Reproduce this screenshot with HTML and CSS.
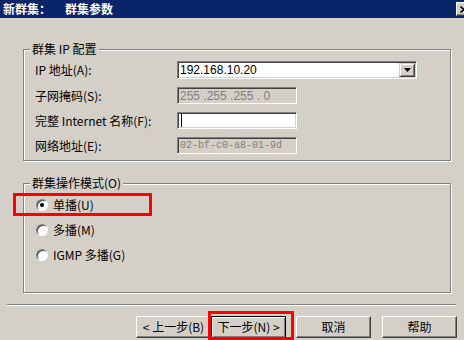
FILE: index.html
```html
<!DOCTYPE html>
<html lang="zh-CN">
<head>
    <meta charset="UTF-8">
    <meta name="viewport" content="width=device-width, initial-scale=1.0">
    <title>新群集：群集参数</title>
    <link rel="stylesheet" href="styles.css">
</head>
<body>
    <!-- Title bar -->
    <div class="titlebar">
        <span class="title">新群集：<span class="title-sub">群集参数</span></span>
        <span class="close">
            <svg width="8" height="7" viewBox="0 0 8 7">
                <path d="M0.5 0.5 L7.5 6.5 M7.5 0.5 L0.5 6.5" stroke="#000" stroke-width="1.6"/>
            </svg>
        </span>
    </div>

    <!-- IP settings -->
    <div class="group group-ip">
        <div class="group-title">群集 IP 配置</div>
        <div class="form">
            <label class="form-label">IP 地址(A):</label>
            <div class="combo">
                <span class="combo-text">192.168.10.20</span>
                <span class="combo-btn">
                    <svg width="7" height="4" viewBox="0 0 7 4"><path d="M0 0 H7 L3.5 4 Z" fill="#000"/></svg>
                </span>
            </div>

            <label class="form-label">子网掩码(S):</label>
            <div class="field disabled">255 .255 .255 . 0</div>

            <label class="form-label">完整 Internet 名称(F):</label>
            <div class="field"><span class="caret"></span></div>

            <label class="form-label">网络地址(E):</label>
            <div class="field disabled mono">02-bf-c0-a8-01-9d</div>
        </div>
    </div>

    <!-- Operation mode -->
    <div class="group group-mode">
        <div class="group-title">群集操作模式(O)</div>
        <div class="radios">
            <div class="radio-row highlight"><span class="radio checked"></span>单播(U)</div>
            <div class="radio-row"><span class="radio"></span>多播(M)</div>
            <div class="radio-row"><span class="radio"></span>IGMP 多播(G)</div>
        </div>
    </div>

    <div class="separator"></div>

    <div class="buttons">
        <button class="btn">&lt; 上一步(B)</button>
        <button class="btn default highlight">下一步(N) &gt;</button>
        <button class="btn btn-cancel">取消</button>
        <button class="btn btn-help">帮助</button>
    </div>
</body>
</html>
```

FILE: styles.css
```css
body {
    margin: 0;
    width: 464px;
    height: 340px;
    overflow: hidden;
    background-color: #d4d0c8;
    font-family: "Noto Sans CJK SC", sans-serif;
    font-size: 12px;
    color: #000;
}

/* Title bar */
.titlebar {
    height: 18px;
    background-color: #0a246a;
    display: flex;
    align-items: center;
    justify-content: space-between;
    padding-left: 3px;
    overflow: hidden;
}

.title {
    color: #fff;
    font-weight: bold;
    line-height: 18px;
}

.title-sub {
    margin-left: 14px;
}

.close {
    width: 16px;
    height: 14px;
    margin-right: -8px;
    box-sizing: border-box;
    background-color: #d4d0c8;
    border: 1px solid;
    border-color: #fff #404040 #404040 #fff;
    box-shadow: inset -1px -1px 0 #808080;
    display: flex;
    align-items: center;
    justify-content: center;
}

/* Group boxes */
.group {
    margin: 31px 13px 0 23px;
    border: 1px solid #808080;
    box-shadow: inset 1px 1px 0 #fff, 1px 1px 0 #fff;
    display: flex;
    flex-direction: column;
}

.group-title {
    align-self: flex-start;
    margin: -8px 0 0 6px;
    padding: 0 2px;
    height: 14px;
    line-height: 14px;
    background-color: #d4d0c8;
}

.group-mode {
    margin-top: 22px;
}

.form {
    display: grid;
    grid-template-columns: 142px auto;
    grid-template-rows: 18px 17px 17px 17px;
    row-gap: 8px;
    align-items: center;
    padding: 5px 0 6px 11px;
}

.form-label {
    line-height: 14px;
}

/* Sunken edit controls */
.combo,
.field {
    box-sizing: border-box;
    border: 1px solid;
    border-color: #808080 #fff #fff #808080;
    box-shadow: inset 1px 1px 0 #404040, inset -1px -1px 0 #d4d0c8;
    background-color: #fff;
    display: flex;
    align-items: center;
    font-family: "Liberation Sans", sans-serif;
}

.combo {
    width: 240px;
    height: 18px;
}

.combo-text {
    padding-left: 2px;
}

.combo-btn {
    margin: 0 1px 0 auto;
    width: 16px;
    height: 14px;
    box-sizing: border-box;
    background-color: #d4d0c8;
    border: 1px solid;
    border-color: #d4d0c8 #404040 #404040 #d4d0c8;
    box-shadow: inset 1px 1px 0 #fff, inset -1px -1px 0 #808080;
    display: flex;
    align-items: center;
    justify-content: center;
}

.field {
    width: 120px;
    height: 17px;
    padding-left: 2px;
}

.field.disabled {
    background-color: #d4d0c8;
    color: #808080;
}

.field.mono {
    font-family: "Liberation Mono", monospace;
    font-size: 10px;
}

.caret {
    width: 1px;
    height: 13px;
    background-color: #000;
    margin-left: 1px;
}

/* Radio buttons */
.radios {
    display: flex;
    flex-direction: column;
    gap: 9px;
    padding: 7px 0 29px 0;
}

.radio-row {
    position: relative;
    display: flex;
    align-items: center;
    height: 16px;
    padding-left: 12px;
    line-height: 14px;
}

.radio {
    width: 12px;
    height: 12px;
    box-sizing: border-box;
    border-radius: 50%;
    background-color: #fff;
    border: 1px solid;
    border-color: #808080 #fff #fff #808080;
    box-shadow: inset 1px 1px 0 #404040;
    margin-right: 5px;
    display: flex;
    align-items: center;
    justify-content: center;
}

.radio.checked::after {
    content: "";
    width: 4px;
    height: 4px;
    border-radius: 50%;
    background-color: #000;
}

/* Red annotation boxes */
.radio-row.highlight::after {
    content: "";
    position: absolute;
    left: -11px;
    top: -4px;
    width: 139px;
    height: 23px;
    border: 3px solid #ff0000;
    box-sizing: border-box;
}

.btn.highlight::after {
    content: "";
    position: absolute;
    left: -4px;
    top: -6px;
    width: 86px;
    height: 29px;
    border: 3px solid #ff0000;
    box-sizing: border-box;
}

/* Footer */
.separator {
    margin: 11px 8px 0 7px;
    border-top: 1px solid #808080;
    border-bottom: 1px solid #fff;
}

.buttons {
    display: flex;
    justify-content: flex-end;
    margin-top: 10px;
    padding-right: 7px;
}

.btn {
    position: relative;
    width: 75px;
    height: 22px;
    box-sizing: border-box;
    padding: 0;
    background-color: #d4d0c8;
    border: 1px solid;
    border-color: #fff #404040 #404040 #fff;
    box-shadow: inset -1px -1px 0 #808080;
    font-family: "Noto Sans CJK SC", sans-serif;
    font-size: 12px;
    color: #000;
    line-height: 14px;
}

.btn.default {
    border-color: #000;
    box-shadow: inset 1px 1px 0 #fff, inset -1px -1px 0 #808080;
}

.btn-cancel {
    margin-left: 10px;
}

.btn-help {
    margin-left: 11px;
}
```
